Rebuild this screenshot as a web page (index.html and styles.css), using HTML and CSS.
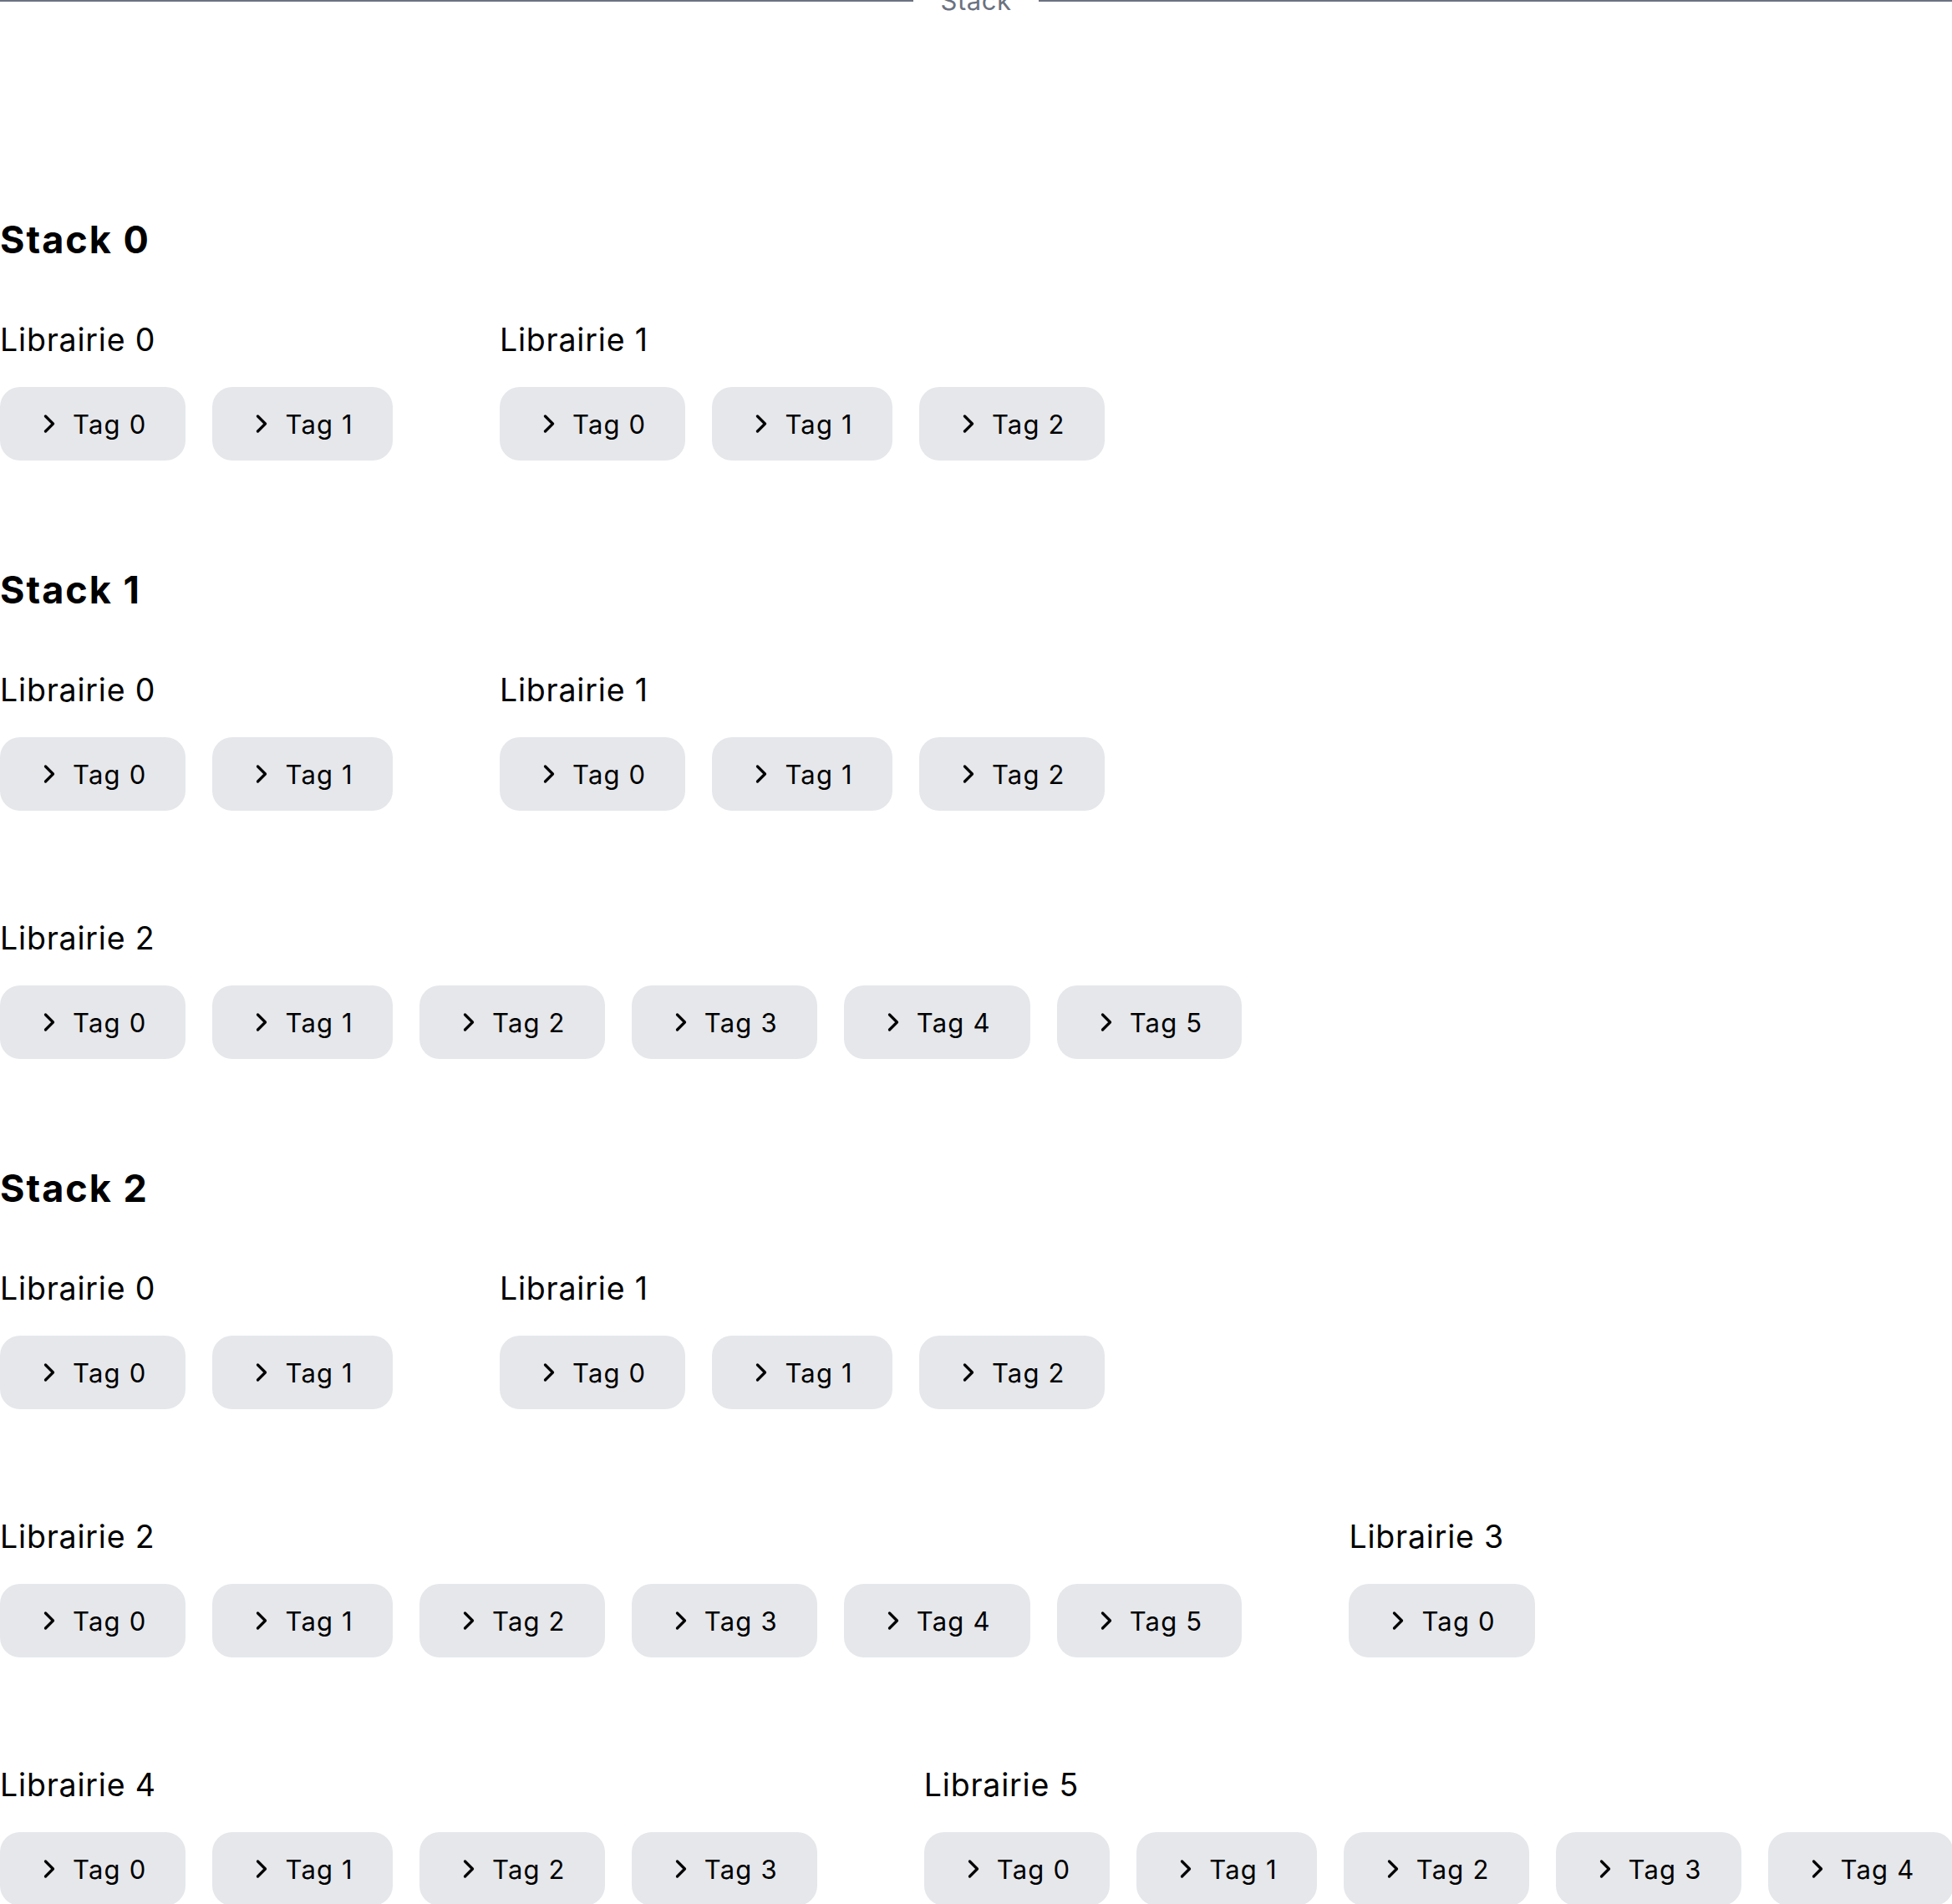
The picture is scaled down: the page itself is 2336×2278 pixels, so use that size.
FILE: index.html
```html
<!DOCTYPE html>
<html lang="fr">
<head>
<meta charset="utf-8">
<title>Stack</title>
<link rel="stylesheet" href="styles.css">
</head>
<body>
<div class="divider"><span class="divider-line"></span><span class="divider-label">Stack</span><span class="divider-line"></span></div>

<main class="stacks">
  <section class="stack">
    <h2 class="stack-title">Stack 0</h2>
    <div class="rows">
      <div class="row">
        <div class="lib"><h3 class="lib-title">Librairie 0</h3><div class="tags">
          <button class="tag"><svg class="chev" viewBox="0 0 24 24"><path d="m9 18 6-6-6-6"/></svg>Tag 0</button>
          <button class="tag"><svg class="chev" viewBox="0 0 24 24"><path d="m9 18 6-6-6-6"/></svg>Tag 1</button>
        </div></div>
        <div class="lib"><h3 class="lib-title">Librairie 1</h3><div class="tags">
          <button class="tag"><svg class="chev" viewBox="0 0 24 24"><path d="m9 18 6-6-6-6"/></svg>Tag 0</button>
          <button class="tag"><svg class="chev" viewBox="0 0 24 24"><path d="m9 18 6-6-6-6"/></svg>Tag 1</button>
          <button class="tag"><svg class="chev" viewBox="0 0 24 24"><path d="m9 18 6-6-6-6"/></svg>Tag 2</button>
        </div></div>
      </div>
    </div>
  </section>

  <section class="stack">
    <h2 class="stack-title">Stack 1</h2>
    <div class="rows">
      <div class="row">
        <div class="lib"><h3 class="lib-title">Librairie 0</h3><div class="tags">
          <button class="tag"><svg class="chev" viewBox="0 0 24 24"><path d="m9 18 6-6-6-6"/></svg>Tag 0</button>
          <button class="tag"><svg class="chev" viewBox="0 0 24 24"><path d="m9 18 6-6-6-6"/></svg>Tag 1</button>
        </div></div>
        <div class="lib"><h3 class="lib-title">Librairie 1</h3><div class="tags">
          <button class="tag"><svg class="chev" viewBox="0 0 24 24"><path d="m9 18 6-6-6-6"/></svg>Tag 0</button>
          <button class="tag"><svg class="chev" viewBox="0 0 24 24"><path d="m9 18 6-6-6-6"/></svg>Tag 1</button>
          <button class="tag"><svg class="chev" viewBox="0 0 24 24"><path d="m9 18 6-6-6-6"/></svg>Tag 2</button>
        </div></div>
      </div>
      <div class="row">
        <div class="lib"><h3 class="lib-title">Librairie 2</h3><div class="tags">
          <button class="tag"><svg class="chev" viewBox="0 0 24 24"><path d="m9 18 6-6-6-6"/></svg>Tag 0</button>
          <button class="tag"><svg class="chev" viewBox="0 0 24 24"><path d="m9 18 6-6-6-6"/></svg>Tag 1</button>
          <button class="tag"><svg class="chev" viewBox="0 0 24 24"><path d="m9 18 6-6-6-6"/></svg>Tag 2</button>
          <button class="tag"><svg class="chev" viewBox="0 0 24 24"><path d="m9 18 6-6-6-6"/></svg>Tag 3</button>
          <button class="tag"><svg class="chev" viewBox="0 0 24 24"><path d="m9 18 6-6-6-6"/></svg>Tag 4</button>
          <button class="tag"><svg class="chev" viewBox="0 0 24 24"><path d="m9 18 6-6-6-6"/></svg>Tag 5</button>
        </div></div>
      </div>
    </div>
  </section>

  <section class="stack">
    <h2 class="stack-title">Stack 2</h2>
    <div class="rows">
      <div class="row">
        <div class="lib"><h3 class="lib-title">Librairie 0</h3><div class="tags">
          <button class="tag"><svg class="chev" viewBox="0 0 24 24"><path d="m9 18 6-6-6-6"/></svg>Tag 0</button>
          <button class="tag"><svg class="chev" viewBox="0 0 24 24"><path d="m9 18 6-6-6-6"/></svg>Tag 1</button>
        </div></div>
        <div class="lib"><h3 class="lib-title">Librairie 1</h3><div class="tags">
          <button class="tag"><svg class="chev" viewBox="0 0 24 24"><path d="m9 18 6-6-6-6"/></svg>Tag 0</button>
          <button class="tag"><svg class="chev" viewBox="0 0 24 24"><path d="m9 18 6-6-6-6"/></svg>Tag 1</button>
          <button class="tag"><svg class="chev" viewBox="0 0 24 24"><path d="m9 18 6-6-6-6"/></svg>Tag 2</button>
        </div></div>
      </div>
      <div class="row">
        <div class="lib"><h3 class="lib-title">Librairie 2</h3><div class="tags">
          <button class="tag"><svg class="chev" viewBox="0 0 24 24"><path d="m9 18 6-6-6-6"/></svg>Tag 0</button>
          <button class="tag"><svg class="chev" viewBox="0 0 24 24"><path d="m9 18 6-6-6-6"/></svg>Tag 1</button>
          <button class="tag"><svg class="chev" viewBox="0 0 24 24"><path d="m9 18 6-6-6-6"/></svg>Tag 2</button>
          <button class="tag"><svg class="chev" viewBox="0 0 24 24"><path d="m9 18 6-6-6-6"/></svg>Tag 3</button>
          <button class="tag"><svg class="chev" viewBox="0 0 24 24"><path d="m9 18 6-6-6-6"/></svg>Tag 4</button>
          <button class="tag"><svg class="chev" viewBox="0 0 24 24"><path d="m9 18 6-6-6-6"/></svg>Tag 5</button>
        </div></div>
        <div class="lib"><h3 class="lib-title">Librairie 3</h3><div class="tags">
          <button class="tag"><svg class="chev" viewBox="0 0 24 24"><path d="m9 18 6-6-6-6"/></svg>Tag 0</button>
        </div></div>
      </div>
      <div class="row">
        <div class="lib"><h3 class="lib-title">Librairie 4</h3><div class="tags">
          <button class="tag"><svg class="chev" viewBox="0 0 24 24"><path d="m9 18 6-6-6-6"/></svg>Tag 0</button>
          <button class="tag"><svg class="chev" viewBox="0 0 24 24"><path d="m9 18 6-6-6-6"/></svg>Tag 1</button>
          <button class="tag"><svg class="chev" viewBox="0 0 24 24"><path d="m9 18 6-6-6-6"/></svg>Tag 2</button>
          <button class="tag"><svg class="chev" viewBox="0 0 24 24"><path d="m9 18 6-6-6-6"/></svg>Tag 3</button>
        </div></div>
        <div class="lib"><h3 class="lib-title">Librairie 5</h3><div class="tags">
          <button class="tag"><svg class="chev" viewBox="0 0 24 24"><path d="m9 18 6-6-6-6"/></svg>Tag 0</button>
          <button class="tag"><svg class="chev" viewBox="0 0 24 24"><path d="m9 18 6-6-6-6"/></svg>Tag 1</button>
          <button class="tag"><svg class="chev" viewBox="0 0 24 24"><path d="m9 18 6-6-6-6"/></svg>Tag 2</button>
          <button class="tag"><svg class="chev" viewBox="0 0 24 24"><path d="m9 18 6-6-6-6"/></svg>Tag 3</button>
          <button class="tag"><svg class="chev" viewBox="0 0 24 24"><path d="m9 18 6-6-6-6"/></svg>Tag 4</button>
        </div></div>
      </div>
    </div>
  </section>
</main>
</body>
</html>
```
FILE: styles.css
```css
html, body {
  margin: 0;
  padding: 0;
  background: #ffffff;
}

body {
  font-family: Inter, "Noto Sans", "Liberation Sans", sans-serif;
  color: #000000;
  overflow: hidden;
}

.divider {
  display: flex;
  align-items: center;
  margin-top: -19px;
}

.divider-line {
  flex: 1;
  height: 2px;
  background: #6b7280;
}

.divider-label {
  font-size: 31px;
  line-height: 39px;
  color: #6b7280;
  padding: 0 33px;
  letter-spacing: 0.5px;
}

.stacks {
  display: flex;
  flex-direction: column;
  gap: 128px;
  padding-top: 240px;
}

.stack-title {
  margin: 0 0 68px 0;
  font-size: 45px;
  line-height: 54px;
  font-weight: 700;
  letter-spacing: 2px;
}

.rows {
  display: flex;
  flex-direction: column;
  gap: 128px;
}

.row {
  display: flex;
  gap: 128px;
}

.lib-title {
  margin: 0 0 32px 0;
  font-size: 37.5px;
  line-height: 49px;
  font-weight: 400;
  letter-spacing: 0.8px;
}

.tags {
  display: flex;
  gap: 32px;
}

.tag {
  display: inline-flex;
  align-items: center;
  gap: 10px;
  height: 88px;
  padding: 0 47px 0 41px;
  border: none;
  border-radius: 24px;
  background: #e5e7eb;
  font-family: inherit;
  font-size: 31px;
  letter-spacing: 1.2px;
  color: #000000;
  white-space: nowrap;
}

.chev {
  width: 36px;
  height: 36px;
  fill: none;
  stroke: currentColor;
  stroke-width: 2.2;
  stroke-linecap: round;
  stroke-linejoin: round;
  flex: none;
}
```
